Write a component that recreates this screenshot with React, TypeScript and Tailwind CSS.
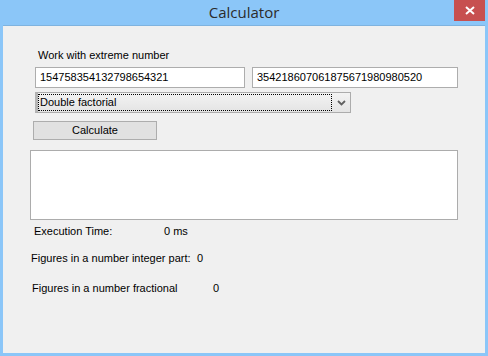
import React from "react";

const ui = { fontFamily: '"Liberation Sans", Arial, sans-serif' };

function CloseX() {
  return (
    <svg width="10" height="9" viewBox="0 0 10 9">
      <path d="M1 1 L9 8 M9 1 L1 8" stroke="white" strokeWidth="2" />
    </svg>
  );
}

function Chevron() {
  return (
    <svg width="9" height="6" viewBox="0 0 9 6">
      <path d="M1 1 L4.5 4.5 L8 1" stroke="#606060" strokeWidth="1.8" fill="none" />
    </svg>
  );
}

export default function App() {
  return (
    <div className="flex h-[356px] w-[488px] flex-col bg-[#8bc6f8] text-[11px] text-black" style={ui}>
      {/* title bar */}
      <div className="relative flex h-[25px] items-center justify-center">
        <span
          className="text-[15px] leading-none text-[#2b2b2b]"
          style={{ fontFamily: '"Open Sans", "Noto Sans", sans-serif' }}
        >
          Calculator
        </span>
        <div className="absolute right-[3px] top-0 flex h-[21px] w-[31px] items-center justify-center bg-[#c75050]">
          <CloseX />
        </div>
      </div>

      {/* client area */}
      <div className="mx-[3px] mb-[3px] flex flex-1 flex-col border-t border-[#7fb3df] bg-[#f0f0f0]">
        <div className="ml-[35px] mt-[23px] h-[13px] leading-[13px]">Work with extreme number</div>

        <div className="mt-[5px] flex">
          <div className="ml-[32px] flex h-[21px] w-[210px] items-center border border-[#adadad] bg-white pl-[4px]">
            154758354132798654321
          </div>
          <div className="ml-[7px] flex h-[21px] w-[206px] items-center border border-[#adadad] bg-white pl-[4px]">
            354218607061875671980980520
          </div>
        </div>

        <div className="ml-[32px] mt-[4px] flex h-[21px] w-[316px] border border-[#acacac] border-l-[3px] border-l-[#b4b4b4] bg-gradient-to-b from-[#f3f3f3] to-[#e4e4e4]">
          <div className="mt-[1px] mb-[1px] flex w-[294px] items-center border border-dotted border-black pl-[1px]">
            Double factorial
          </div>
          <div className="flex flex-1 items-center justify-center">
            <Chevron />
          </div>
        </div>

        <div className="ml-[30px] mt-[8px] flex h-[19px] w-[124px] items-center justify-center border border-[#adadad] bg-[#e1e1e1]">
          Calculate
        </div>

        <div className="ml-[27px] mt-[10px] h-[70px] w-[428px] border border-[#acacac] bg-white" />

        <div className="mt-[5px] flex h-[13px] leading-[13px]">
          <span className="ml-[31px] w-[130px]">Execution Time:</span>
          <span>0 ms</span>
        </div>

        <div className="mt-[14px] flex h-[13px] leading-[13px]">
          <span className="ml-[28px] w-[166px]">Figures in a number integer part:</span>
          <span>0</span>
        </div>

        <div className="mt-[17px] flex h-[13px] leading-[13px]">
          <span className="ml-[29px] w-[181px]">Figures in a number fractional</span>
          <span>0</span>
        </div>
      </div>
    </div>
  );
}
